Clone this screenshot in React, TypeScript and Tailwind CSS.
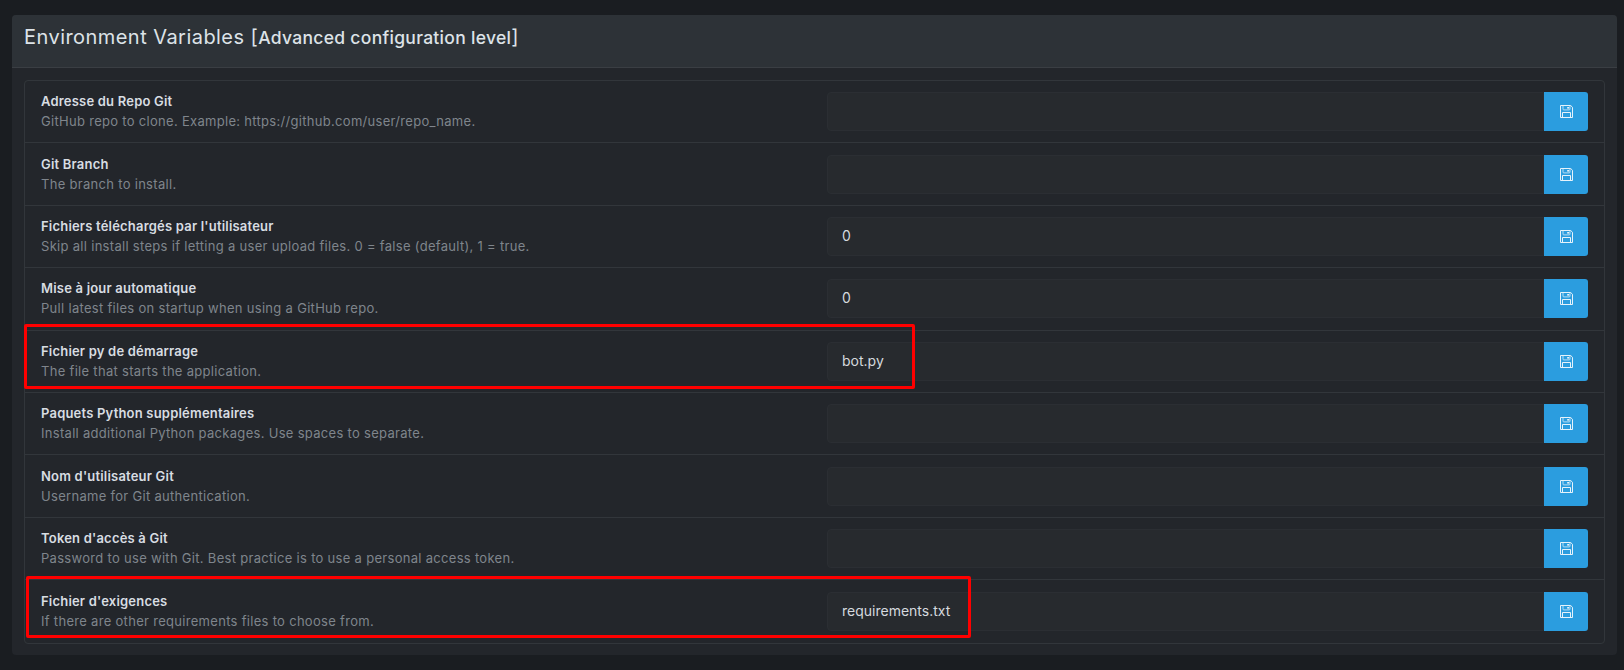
const variables = [
  { title: 'Adresse du Repo Git', description: 'GitHub repo to clone. Example: https://github.com/user/repo_name.', value: '' },
  { title: 'Git Branch', description: 'The branch to install.', value: '' },
  { title: "Fichiers téléchargés par l'utilisateur", description: 'Skip all install steps if letting a user upload files. 0 = false (default), 1 = true.', value: '0' },
  { title: 'Mise à jour automatique', description: 'Pull latest files on startup when using a GitHub repo.', value: '0' },
  { title: 'Fichier py de démarrage', description: 'The file that starts the application.', value: 'bot.py' },
  { title: 'Paquets Python supplémentaires', description: 'Install additional Python packages. Use spaces to separate.', value: '' },
  { title: "Nom d'utilisateur Git", description: 'Username for Git authentication.', value: '' },
  { title: "Token d'accès à Git", description: 'Password to use with Git. Best practice is to use a personal access token.', value: '' },
  { title: "Fichier d'exigences", description: 'If there are other requirements files to choose from.', value: 'requirements.txt' },
]

function SaveIcon() {
  return (
    <svg width="13" height="13" viewBox="0 0 13 13" fill="none" stroke="currentColor" strokeWidth="1">
      <path d="M.5.5h10.2l1.8 1.8v10.2H.5z" />
      <path d="M3 .5v3.6c0 .5.3.8.8.8h5.4c.5 0 .8-.3.8-.8V.5" opacity="0.75" />
      <path d="M2.5 12.5V7.5h8v5" />
      <rect x="7.2" y="2" width="2" height="1.6" fill="currentColor" stroke="none" />
    </svg>
  )
}

function VariableRow({ title, description, value }: { title: string; description: string; value: string }) {
  return (
    <li className="flex h-[62.4px] items-center border-b border-[#32363b] pr-4 pl-4 last:border-b-0">
      <div className="w-[786px] shrink-0">
        <p className="text-[13px] leading-[19px] font-semibold tracking-[0.2px] text-[#d8dde2]">{title}</p>
        <p className="mt-[1px] text-[13px] leading-[19px] tracking-[0.3px] text-[#7f858c]">{description}</p>
      </div>
      <div className="flex h-[39px] flex-1">
        <input
          readOnly
          defaultValue={value}
          className="h-full min-w-0 flex-1 rounded-l-[4px] border border-[#2b2e33] bg-[#272a2e] px-[14px] pb-[2px] text-[14px] text-[#d5d9de] outline-none"
        />
        <button className="flex h-full w-11 items-center justify-center rounded-r-[3px] bg-[#2b9ddf] text-[#e6f3fb]">
          <SaveIcon />
        </button>
      </div>
    </li>
  )
}

export default function App() {
  return (
    <div className="relative min-h-[670px] bg-[#1a1d21] pt-[15px] pr-[7px] pb-4 pl-[12px] font-['Inter',sans-serif]">
      <div className="overflow-hidden rounded-[4px] bg-[#23262b]">
        <div className="flex h-[53px] items-start border-b border-[#3a3e43] bg-[#2d3237] pt-[9px] pl-3">
          <h1 className="text-[20px] leading-[27px] tracking-[0.45px] text-[#dde3e8]">
            Environment Variables{' '}
            <span className="text-[17.5px] font-medium tracking-[0.3px]">
              <span className="text-[20px] font-normal">[</span>Advanced configuration level<span className="text-[20px] font-normal">]</span>
            </span>
          </h1>
        </div>
        <div className="px-3 pt-3 pb-[11px]">
          <ul className="rounded-[4px] border border-[#32363b]">
            {variables.map((v) => (
              <VariableRow key={v.title} {...v} />
            ))}
          </ul>
        </div>
      </div>

      {/* highlights drawn on top of the screenshot */}
      <div className="absolute top-[324px] left-[24px] h-[65px] w-[891px] rounded-[2px] border-[3px] border-[#ff0000]" />
      <div className="absolute top-[576px] left-[26px] h-[62px] w-[945px] rounded-[2px] border-[3px] border-[#ff0000]" />
    </div>
  )
}
